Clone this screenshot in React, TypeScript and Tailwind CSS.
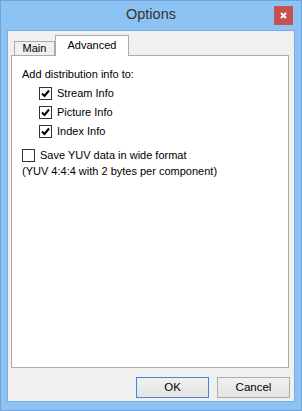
import { ReactNode } from "react";

const ui = { fontFamily: '"Liberation Sans", Arial, sans-serif' };

function CheckBox({ checked }: { checked?: boolean }) {
  return (
    <span className="w-[13px] h-[13px] border border-[#333333] bg-white flex items-center justify-center shrink-0">
      {checked && (
        <svg width="9" height="9" viewBox="0 0 9 9">
          <path d="M1 4.5 L3.5 7 L8 1.5" fill="none" stroke="#000" strokeWidth="2" />
        </svg>
      )}
    </span>
  );
}

function CheckRow({ checked, children }: { checked?: boolean; children: ReactNode }) {
  return (
    <div className="h-[19px] flex items-center gap-[5px]">
      <CheckBox checked={checked} />
      <span>{children}</span>
    </div>
  );
}

function Button({ label, isDefault }: { label: string; isDefault?: boolean }) {
  return (
    <button
      className={`w-[73px] h-[21px] text-[11.5px] text-black bg-gradient-to-b from-[#f0f0f0] to-[#e5e5e5] border ${
        isDefault ? "border-[#3c8be0]" : "border-[#acacac]"
      }`}
    >
      {label}
    </button>
  );
}

export default function App() {
  return (
    <div
      className="w-[302px] h-[411px] bg-[#8cc3f4] border border-[#6fa3d9] flex flex-col text-[11px] text-black"
      style={ui}
    >
      {/* title bar */}
      <div className="h-[29px] relative flex items-center justify-center">
        <span className="text-[14.5px] text-[#333333] -mt-[2px]">Options</span>
        <div className="absolute right-[8px] top-[5px] w-[19px] h-[19px] bg-[#c75050] flex items-center justify-center">
          <svg width="7" height="7" viewBox="0 0 7 7">
            <path d="M1 1 L6 6 M6 1 L1 6" stroke="#fff" strokeWidth="1.8" />
          </svg>
        </div>
      </div>

      {/* client area */}
      <div className="mx-[6px] h-[372px] bg-[#f0f0f0] border border-[#79acde] flex flex-col">
        <div className="pl-[3px] pr-[5px] pt-[3px] flex flex-col">
          {/* tabs */}
          <div className="flex items-end h-[21px] relative z-10">
            <div className="ml-[3px] w-[41px] h-[14px] border border-b-0 border-[#acacac] bg-[#f0f0f0] flex items-center justify-center">
              <span className="-mt-[1px]">Main</span>
            </div>
            <div className="w-[74px] h-[21px] -mb-[1px] border border-b-0 border-[#acacac] bg-white flex items-center justify-center">
              <span className="-mt-[2px]">Advanced</span>
            </div>
          </div>
          {/* panel */}
          <div className="h-[313px] bg-white border border-[#acacac] pl-[10px] pt-[10px]">
            <div className="h-[16px] leading-[16px]">Add distribution info to:</div>
            <div className="pl-[17px] mt-[2px]">
              <CheckRow checked>Stream Info</CheckRow>
              <CheckRow checked>Picture Info</CheckRow>
              <CheckRow checked>Index Info</CheckRow>
            </div>
            <div className="mt-[5px]">
              <CheckRow>Save YUV data in wide format</CheckRow>
            </div>
            <div className="h-[16px] leading-[16px] -mt-[2px]">(YUV 4:4:4 with 2 bytes per component)</div>
          </div>
        </div>
        {/* buttons */}
        <div className="flex justify-end gap-[8px] pr-[4px] mt-[9px]">
          <Button label="OK" isDefault />
          <Button label="Cancel" />
        </div>
      </div>
    </div>
  );
}
